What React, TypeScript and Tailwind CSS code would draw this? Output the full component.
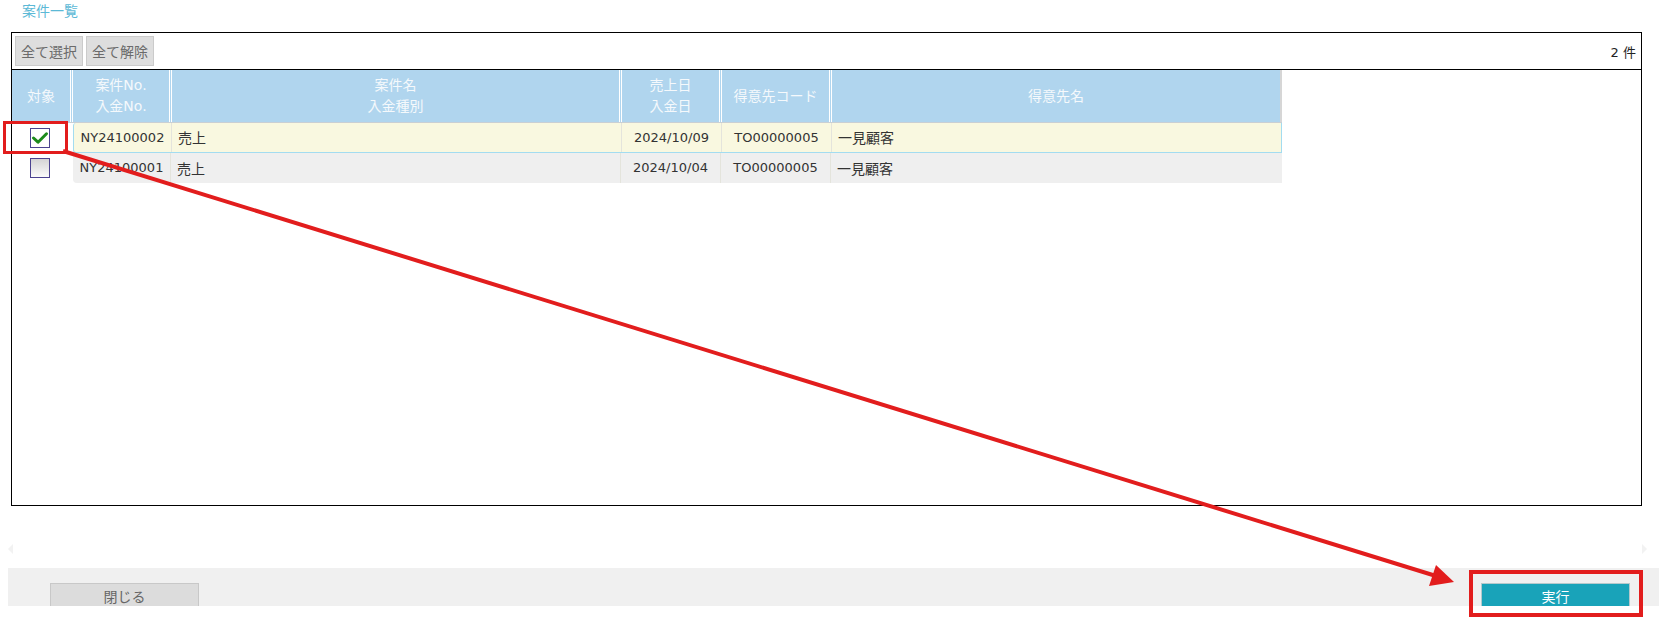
import React from "react";

const FONT = '"DejaVu Sans", "Noto Sans CJK JP", sans-serif';
const CJK = '"Noto Sans CJK JP", sans-serif';

type Row = {
  no: string;
  kind: string;
  date: string;
  code: string;
  name: string;
  checked: boolean;
};

const rows: Row[] = [
  { no: "NY24100002", kind: "売上", date: "2024/10/09", code: "TO00000005", name: "一見顧客", checked: true },
  { no: "NY24100001", kind: "売上", date: "2024/10/04", code: "TO00000005", name: "一見顧客", checked: false },
];

function CheckBox({ checked }: { checked: boolean }) {
  return (
    <div
      className={
        "w-[20px] h-[20px] border border-[#4b4390] flex items-center justify-center " +
        (checked ? "bg-white" : "bg-gradient-to-b from-[#d4d4d4] to-[#fbfbfb]")
      }
    >
      {checked && (
        <svg width="18" height="18" viewBox="0 0 18 18">
          <path d="M2.5 9 L7 13.2 L15.5 4.8" fill="none" stroke="#1c8a1c" strokeWidth="3" strokeLinecap="round" strokeLinejoin="round" />
        </svg>
      )}
    </div>
  );
}

const headCell =
  "flex flex-col items-center justify-center text-[#f5f9fc] text-[14px] leading-[21px] border-r-[3px] border-double border-white";

export default function App() {
  return (
    <div className="relative w-[1659px] h-[621px] bg-white overflow-hidden" style={{ fontFamily: FONT }}>
      {/* page title */}
      <div className="h-[32px] pl-[22px] pt-[1px] text-[14px] leading-[18px] text-[#5cb9d6]" style={{ fontFamily: CJK }}>
        案件一覧
      </div>

      {/* list panel */}
      <div className="ml-[11px] w-[1631px] h-[474px] border border-black flex flex-col">
        <div className="h-[37px] border-b border-black flex items-start pt-[3px] pl-[3px] pr-[5px] gap-[3px]">
          <button className="w-[68px] h-[30px] bg-[#dedede] border border-[#cbcbcb] text-[#6b6b6b] text-[14px]" style={{ fontFamily: CJK }}>
            全て選択
          </button>
          <button className="w-[68px] h-[30px] bg-[#dedede] border border-[#cbcbcb] text-[#6b6b6b] text-[14px]" style={{ fontFamily: CJK }}>
            全て解除
          </button>
          <div className="ml-auto self-center text-[13px] text-[#222]">
            2 <span style={{ fontFamily: CJK }}>件</span>
          </div>
        </div>

        <div className="w-[1270px]">
          {/* header */}
          <div className="grid grid-cols-[61px_99px_450px_100px_110px_450px] h-[53px] bg-[#b0d5ee] border-b border-[#c9cfd4]">
            <div className={headCell}>対象</div>
            <div className={headCell}>
              <span>案件No.</span>
              <span>入金No.</span>
            </div>
            <div className={headCell}>
              <span>案件名</span>
              <span>入金種別</span>
            </div>
            <div className={headCell}>
              <span>売上日</span>
              <span>入金日</span>
            </div>
            <div className={headCell}>得意先コード</div>
            <div className="flex items-center justify-center text-[#f5f9fc] text-[14px] border-r-2 border-[#d6d6d6]">得意先名</div>
          </div>

          {/* rows */}
          {rows.map((r, i) => {
            const bg = i === 0 ? "bg-[#f9f8e0] border border-t-0 border-[#a3dcf0] rounded-l-[3px]" : "bg-[#efefef] rounded-bl-[4px]";
            return (
              <div key={r.no} className="grid grid-cols-[61px_1209px] h-[30px]">
                <div className="flex items-center justify-center pr-[5px]">
                  <CheckBox checked={r.checked} />
                </div>
                <div className={"grid grid-cols-[98px_450px_100px_110px_450px] text-[13px] text-[#333] " + bg}>
                  <div className="flex items-center justify-center border-r border-[#e4e4dc]">{r.no}</div>
                  <div className="flex items-center pl-[6px] border-r border-[#e4e4dc] text-[14px]" style={{ fontFamily: CJK }}>
                    {r.kind}
                  </div>
                  <div className="flex items-center justify-center border-r border-[#e4e4dc]">{r.date}</div>
                  <div className="flex items-center justify-center border-r border-[#e4e4dc]">{r.code}</div>
                  <div className="flex items-center pl-[6px] text-[14px]" style={{ fontFamily: CJK }}>
                    {r.name}
                  </div>
                </div>
              </div>
            );
          })}
        </div>
      </div>

      {/* faint scroll arrows */}
      <div className="h-[62px] flex items-center justify-between px-[8px] pt-[24px]">
        <div className="w-0 h-0 border-y-[5px] border-y-transparent border-r-[5px] border-r-[#f2f2f2]" />
        <div className="w-0 h-0 border-y-[5px] border-y-transparent border-l-[5px] border-l-[#f2f2f2] mr-[4px]" />
      </div>

      {/* footer bar */}
      <div className="ml-[8px] h-[38px] bg-[#f0f0f0] overflow-hidden flex items-start justify-between pt-[15px] pl-[42px] pr-[29px]">
        <button className="w-[149px] h-[30px] bg-[#dcdcdc] border border-[#c8c8c8] text-[#666] text-[14px] leading-[18px] flex justify-center items-start pt-[3px]" style={{ fontFamily: CJK }}>
          閉じる
        </button>
        <button className="w-[149px] h-[30px] bg-[#19a3b9] border border-[#b5c9cc] text-white text-[14px] leading-[18px] flex justify-center items-start pt-[3px]" style={{ fontFamily: CJK }}>
          実行
        </button>
      </div>

      {/* annotation overlay */}
      <div className="absolute left-[3px] top-[121px] w-[65px] h-[33px] border-[3px] border-[#e21d1d] pointer-events-none" />
      <div className="absolute left-[1469px] top-[570px] w-[174px] h-[47px] border-4 border-[#e21d1d] pointer-events-none" />
      <svg className="absolute left-0 top-0 pointer-events-none" width="1659" height="621" viewBox="0 0 1659 621">
        <line x1="63" y1="151" x2="1436" y2="576" stroke="#e21d1d" strokeWidth="4" />
        <polygon points="1454,582 1429,586 1436,565" fill="#e21d1d" />
      </svg>
    </div>
  );
}
